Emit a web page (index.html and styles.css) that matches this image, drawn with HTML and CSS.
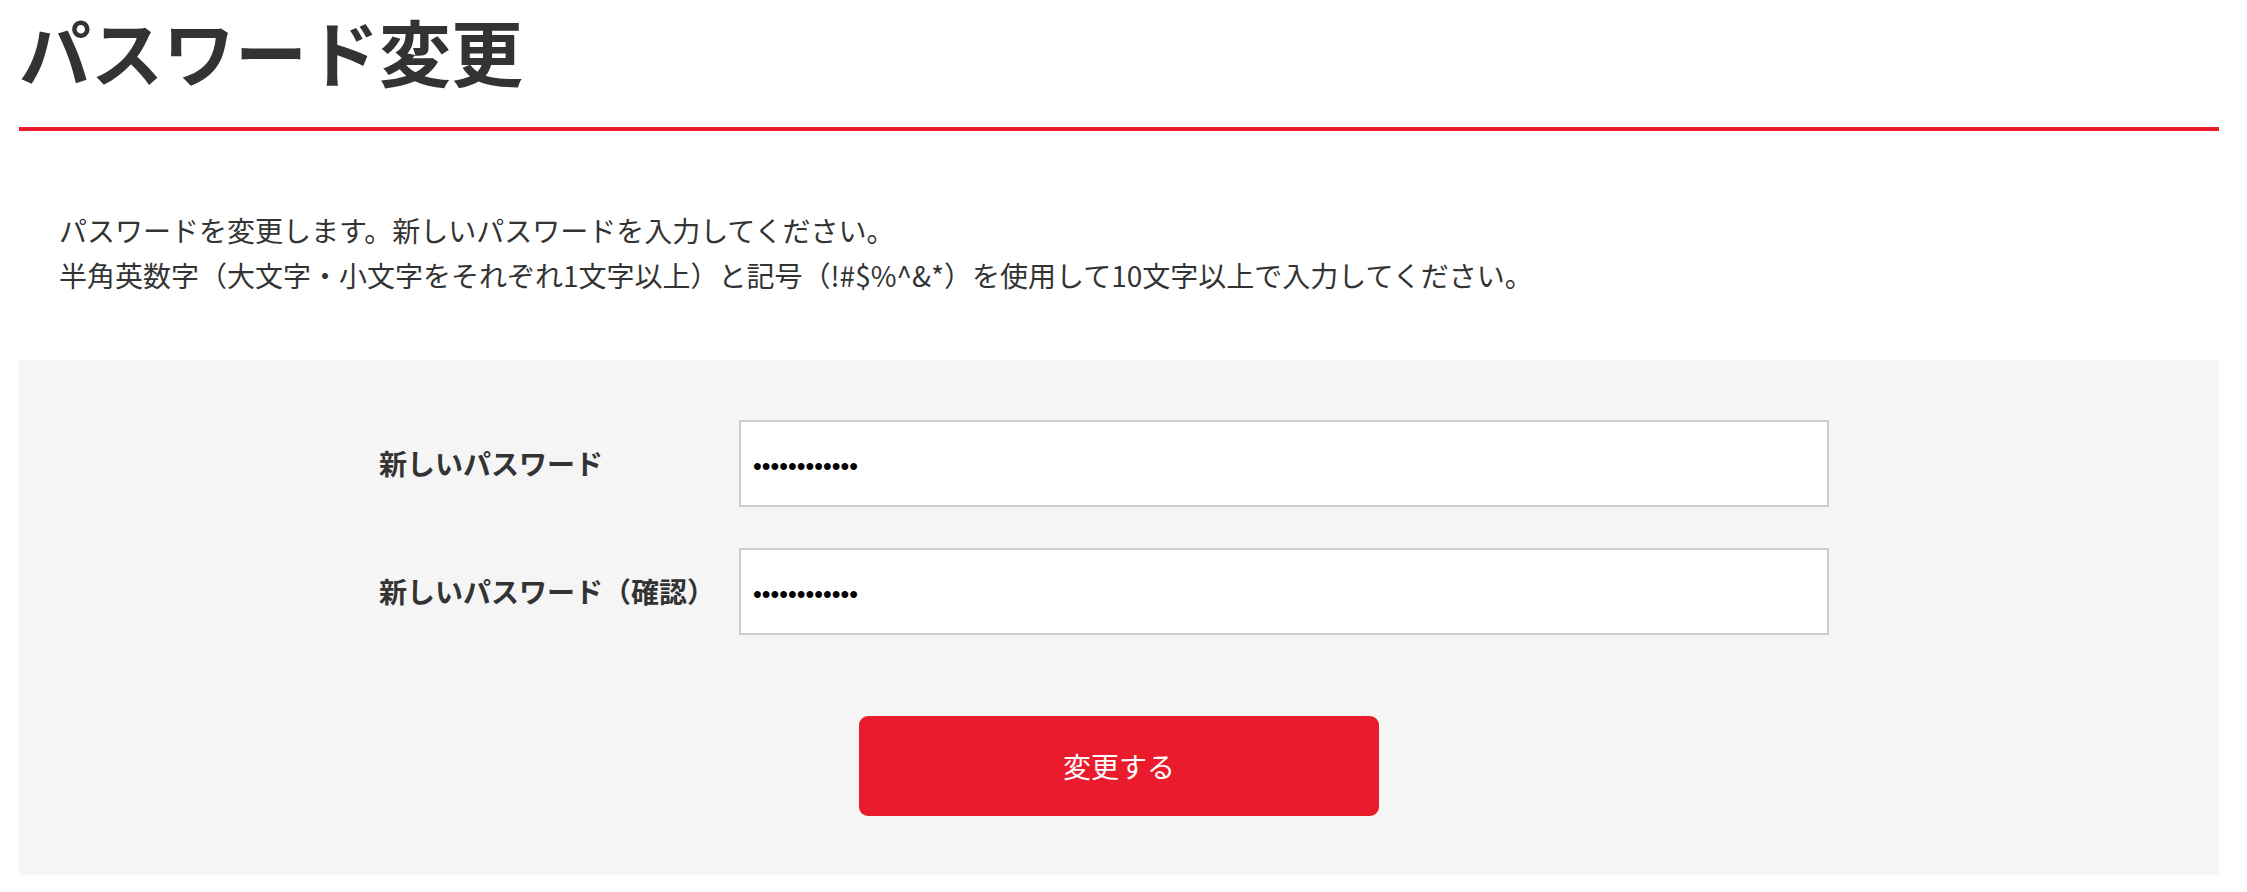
FILE: index.html
```html
<!DOCTYPE html>
<html lang="ja">
<head>
<meta charset="utf-8">
<title>パスワード変更</title>
<link rel="stylesheet" href="styles.css">
</head>
<body>
<main class="page">
  <h1 class="page-title">パスワード変更</h1>
  <div class="intro">
    <p>パスワードを変更します。新しいパスワードを入力してください。</p>
    <p>半角英数字（大文字・小文字をそれぞれ1文字以上）と記号（!#$%^&amp;*）を使用して10文字以上で入力してください。</p>
  </div>
  <form class="form-box">
    <div class="form-grid">
      <label class="form-label" for="pw1">新しいパスワード</label>
      <input class="form-input" id="pw1" type="password" value="abcdefghijkl">
      <label class="form-label" for="pw2">新しいパスワード（確認）</label>
      <input class="form-input" id="pw2" type="password" value="abcdefghijkl">
    </div>
    <div class="form-actions">
      <button class="submit-btn" type="button">変更する</button>
    </div>
  </form>
</main>
</body>
</html>
```

FILE: styles.css
```css
html, body {
  margin: 0;
  padding: 0;
  background: #ffffff;
}

body {
  font-family: "Noto Sans CJK JP", "Noto Sans", sans-serif;
  color: #333333;
}

.page {
  width: 2200px;
  margin-left: 19px;
}

.page-title {
  margin: 0;
  font-size: 72px;
  font-weight: 700;
  line-height: 100px;
  padding-bottom: 27px;
  border-bottom: 4px solid #ea1b2d;
  color: #333333;
}

.intro {
  margin-top: 77px;
  padding-left: 40px;
  font-size: 28px;
  line-height: 1.6;
}

.intro p {
  margin: 0;
}

.form-box {
  margin-top: 62px;
  background: #f5f5f5;
  padding: 60px 0 59px;
}

.form-grid {
  width: 1480px;
  margin: 0 auto;
  display: grid;
  grid-template-columns: 360px 1090px;
  row-gap: 41px;
  align-items: center;
}

.form-label {
  font-size: 28px;
  font-weight: 700;
  color: #333333;
}

.form-input {
  box-sizing: border-box;
  width: 1090px;
  height: 87px;
  border: 2px solid #cccccc;
  background: #ffffff;
  padding: 6px 12px 0;
  font-family: "Liberation Sans", Arial, sans-serif;
  font-size: 25px;
  color: #000000;
  outline: none;
  margin: 0;
}

.form-actions {
  display: flex;
  justify-content: center;
  margin-top: 81px;
}

.submit-btn {
  width: 520px;
  height: 100px;
  border: none;
  border-radius: 9px;
  background: #ea1b2d;
  color: #ffffff;
  font-family: "Noto Sans CJK JP", "Noto Sans", sans-serif;
  font-size: 28px;
  font-weight: 400;
  cursor: pointer;
}
```
